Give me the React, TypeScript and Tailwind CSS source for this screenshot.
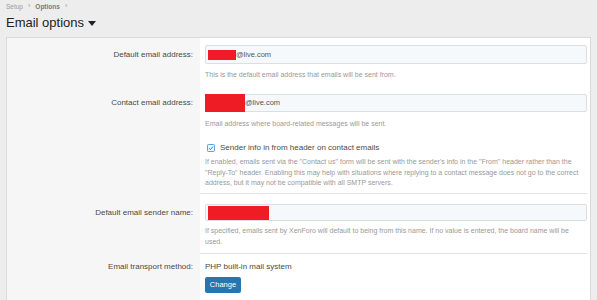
type FieldProps = {
  label?: string;
  children: React.ReactNode;
  pt: string;
  pb: string;
  labelH?: string;
};

function Row({ label, children, pt, pb, labelH = "h-[19px]" }: FieldProps) {
  return (
    <>
      <div className={`bg-[#f6f6f6] pr-[7px] ${pt} ${pb}`}>
        {label && (
          <div className={`flex items-center justify-end text-[8px] text-[#4a4a4a] ${labelH}`}>
            {label}
          </div>
        )}
      </div>
      <div className={`bg-white pl-[5px] pr-[3px] ${pt} ${pb}`}>{children}</div>
    </>
  );
}

function Separator() {
  return (
    <>
      <div className="bg-[#f6f6f6]" />
      <div className="bg-white pr-[3px]">
        <div className="h-px bg-[#e3e3e3]" />
      </div>
    </>
  );
}

function Hint({ lines, mt }: { lines: string[]; mt: string }) {
  return (
    <div className={`${mt} text-[7px] leading-[10.5px] text-[#999]`}>
      {lines.map((l) => (
        <div key={l} className="whitespace-nowrap">
          {l}
        </div>
      ))}
    </div>
  );
}

export default function App() {
  return (
    <div className="h-[300px] overflow-hidden bg-[#ededed] font-['Liberation_Sans',Arial,sans-serif]">
      <div className="px-[6px] pt-[2px]">
        <div className="flex h-[9px] items-center gap-[5px] text-[6.5px] text-[#999]">
          <span>Setup</span>
          <span className="text-[7px]">›</span>
          <span className="font-bold text-[#7a7a7a]">Options</span>
          <span className="text-[7px]">›</span>
        </div>
        <div className="mt-[4px] flex h-[16px] items-center gap-[4px] text-[13px] text-[#222]">
          <span>Email options</span>
          <svg width="8" height="5" viewBox="0 0 8 5" className="mt-[1px]">
            <polygon points="0,0 8,0 4,5" fill="#222" />
          </svg>
        </div>
      </div>

      <div className="mx-[6px] mt-[6px] grid grid-cols-[193px_1fr] border border-[#dadada]">
        <Row label="Default email address:" pt="pt-[7px]" pb="pb-[5.5px]">
          <div className="flex h-[19px] items-center rounded-[2px] border border-[#dcdfe2] bg-[#f6f9fc] pl-[2px] text-[7.5px] text-[#555]">
            <span className="h-[10px] w-[28px] bg-[#ee1c25]" />
            <span>@live.com</span>
          </div>
          <Hint mt="mt-[6px]" lines={["This is the default email address that emails will be sent from."]} />
        </Row>

        <Row label="Contact email address:" pt="pt-[8px]" pb="pb-[6px]" labelH="h-[18px]">
          <div className="flex h-[18px] items-center rounded-[2px] border border-[#dcdfe2] bg-[#f6f9fc] text-[7.5px] text-[#555]">
            <span className="h-[18px] w-[40px] -ml-px bg-[#ee1c25]" />
            <span>@live.com</span>
          </div>
          <Hint mt="mt-[6.5px]" lines={["Email address where board-related messages will be sent."]} />
        </Row>

        <Row pt="pt-[8px]" pb="pb-[4.5px]">
          <div className="flex h-[10px] items-center gap-[5px] pl-[2px] text-[8px] text-[#4a4a4a]">
            <svg width="8" height="8" viewBox="0 0 8 8">
              <rect x="0.5" y="0.5" width="7" height="7" rx="0.8" fill="#eef6fd" stroke="#5aa6de" />
              <polyline points="2,4.2 3.4,5.6 6,2.6" fill="none" stroke="#2e86c9" strokeWidth="1" />
            </svg>
            <span>Sender info in from header on contact emails</span>
          </div>
          <Hint
            mt="mt-[4px]"
            lines={[
              'If enabled, emails sent via the "Contact us" form will be sent with the sender\'s info in the "From" header rather than the',
              '"Reply-To" header. Enabling this may help with situations where replying to a contact message does not go to the correct',
              "address, but it may not be compatible with all SMTP servers.",
            ]}
          />
        </Row>

        <Separator />

        <Row label="Default email sender name:" pt="pt-[10px]" pb="pb-[6px]" labelH="h-[17px]">
          <div className="flex h-[17px] items-center rounded-[2px] border border-[#dcdfe2] bg-[#f6f9fc] pl-[2px]">
            <span className="h-[14px] w-[61px] bg-[#ee1c25]" />
          </div>
          <Hint
            mt="mt-[5px]"
            lines={[
              "If specified, emails sent by XenForo will default to being from this name. If no value is entered, the board name will be",
              "used.",
            ]}
          />
        </Row>

        <Separator />

        <Row label="Email transport method:" pt="pt-[8px]" pb="pb-[8px]" labelH="h-[10px]">
          <div className="flex h-[10px] items-center text-[8px] text-[#4a4a4a]">PHP built-in mail system</div>
          <button className="mt-[5px] flex h-[16px] w-[36px] items-center justify-center rounded-[2px] bg-[#2577b1] text-[7.5px] text-white">
            Change
          </button>
        </Row>
      </div>
    </div>
  );
}
